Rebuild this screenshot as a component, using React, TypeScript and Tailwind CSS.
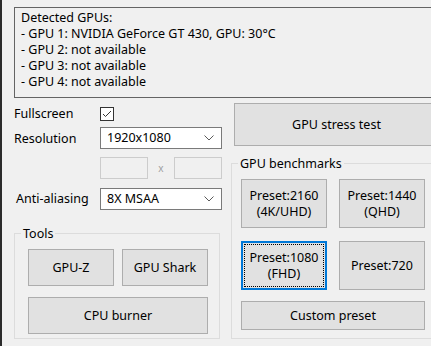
const font = { fontFamily: '"Noto Sans", "Liberation Sans", sans-serif' };

const Chevron = () => (
  <svg width="10" height="6" viewBox="0 0 10 6" className="shrink-0">
    <path d="M0.5 0.5 L5 5 L9.5 0.5" fill="none" stroke="#5a5a5a" strokeWidth="1" />
  </svg>
);

const Select = ({ value }: { value: string }) => (
  <div className="flex h-[22px] w-[122px] items-center justify-between border border-[#7a7a7a] bg-white pl-[6px] pr-[7px]">
    <span>{value}</span>
    <Chevron />
  </div>
);

const Button = ({ children, className = "" }: { children: React.ReactNode; className?: string }) => (
  <div
    className={`flex items-center justify-center border border-[#adadad] bg-[#e1e1e1] text-center leading-[16px] ${className}`}
  >
    {children}
  </div>
);

export default function App() {
  return (
    <div
      style={font}
      className="h-[346px] w-[431px] overflow-hidden border-l-2 border-[#2b2b2b] bg-[#f0f0f0] text-[12.5px] text-black"
    >
      <div className="ml-[12px] mt-[7px] h-[91px] w-[430px] border border-[#646464] pl-[6px] pt-[2px] leading-[16px]">
        <div>Detected GPUs:</div>
        <div>- GPU 1: NVIDIA GeForce GT 430, GPU: 30°C</div>
        <div>- GPU 2: not available</div>
        <div>- GPU 3: not available</div>
        <div>- GPU 4: not available</div>
      </div>

      <div className="flex">
        <div className="ml-[12px] w-[208px]">
          <div className="mt-[5px] flex h-[22px] items-center">
            <span className="w-[86px]">Fullscreen</span>
            <div className="flex h-[14px] w-[14px] items-center justify-center border border-[#333333] bg-white">
              <svg width="12" height="12" viewBox="0 0 12 12">
                <path d="M2 6 L4.5 8.5 L10 3" fill="none" stroke="#333333" strokeWidth="1" />
              </svg>
            </div>
          </div>
          <div className="mt-[2px] flex h-[22px] items-center">
            <span className="w-[86px] pt-[3px]">Resolution</span>
            <Select value="1920x1080" />
          </div>
          <div className="mt-[8px] flex h-[22px] items-center">
            <div className="ml-[86px] h-[22px] w-[48px] border border-[#cccccc]" />
            <span className="w-[26px] text-center text-[10px] text-[#a0a0a0]">x</span>
            <div className="h-[22px] w-[48px] border border-[#cccccc]" />
          </div>
          <div className="mt-[9px] flex h-[22px] items-center">
            <span className="w-[86px] pl-[2px] pt-[1px]">Anti-aliasing</span>
            <Select value="8X MSAA" />
          </div>

          <div className="relative mt-[23px] h-[106px] w-[206px] border border-[#dcdcdc] pl-[13px] pt-[15px]">
            <span className="absolute left-[6px] top-[-9px] bg-[#f0f0f0] px-[2px]">Tools</span>
            <div className="flex gap-[8px]">
              <Button className="h-[37px] w-[86px]">GPU-Z</Button>
              <Button className="h-[37px] w-[86px]">GPU Shark</Button>
            </div>
            <Button className="mt-[11px] h-[37px] w-[180px]">CPU burner</Button>
          </div>
        </div>

        <div className="ml-[9px]">
          <Button className="ml-[3px] mt-[5px] h-[43px] w-[205px]">GPU stress test</Button>
          <div className="relative mt-[17px] h-[176px] w-[210px] border border-[#dcdcdc] pl-[9px] pt-[15px]">
            <span className="absolute left-[6px] top-[-9px] bg-[#f0f0f0] px-[2px]">GPU benchmarks</span>
            <div className="flex gap-[12px]">
              <Button className="h-[49px] w-[86px]">
                Preset:2160
                <br />
                (4K/UHD)
              </Button>
              <Button className="h-[49px] w-[86px]">
                Preset:1440
                <br />
                (QHD)
              </Button>
            </div>
            <div className="mt-[13px] flex gap-[12px]">
              <div className="flex h-[49px] w-[86px] border-2 border-[#0078d7] bg-[#e1e1e1] p-px">
                <div className="flex flex-1 items-center justify-center border border-dotted border-black text-center leading-[16px]">
                  Preset:1080
                  <br />
                  (FHD)
                </div>
              </div>
              <Button className="h-[49px] w-[86px]">Preset:720</Button>
            </div>
            <Button className="mt-[11px] h-[29px] w-[184px]">Custom preset</Button>
          </div>
        </div>
      </div>
    </div>
  );
}
